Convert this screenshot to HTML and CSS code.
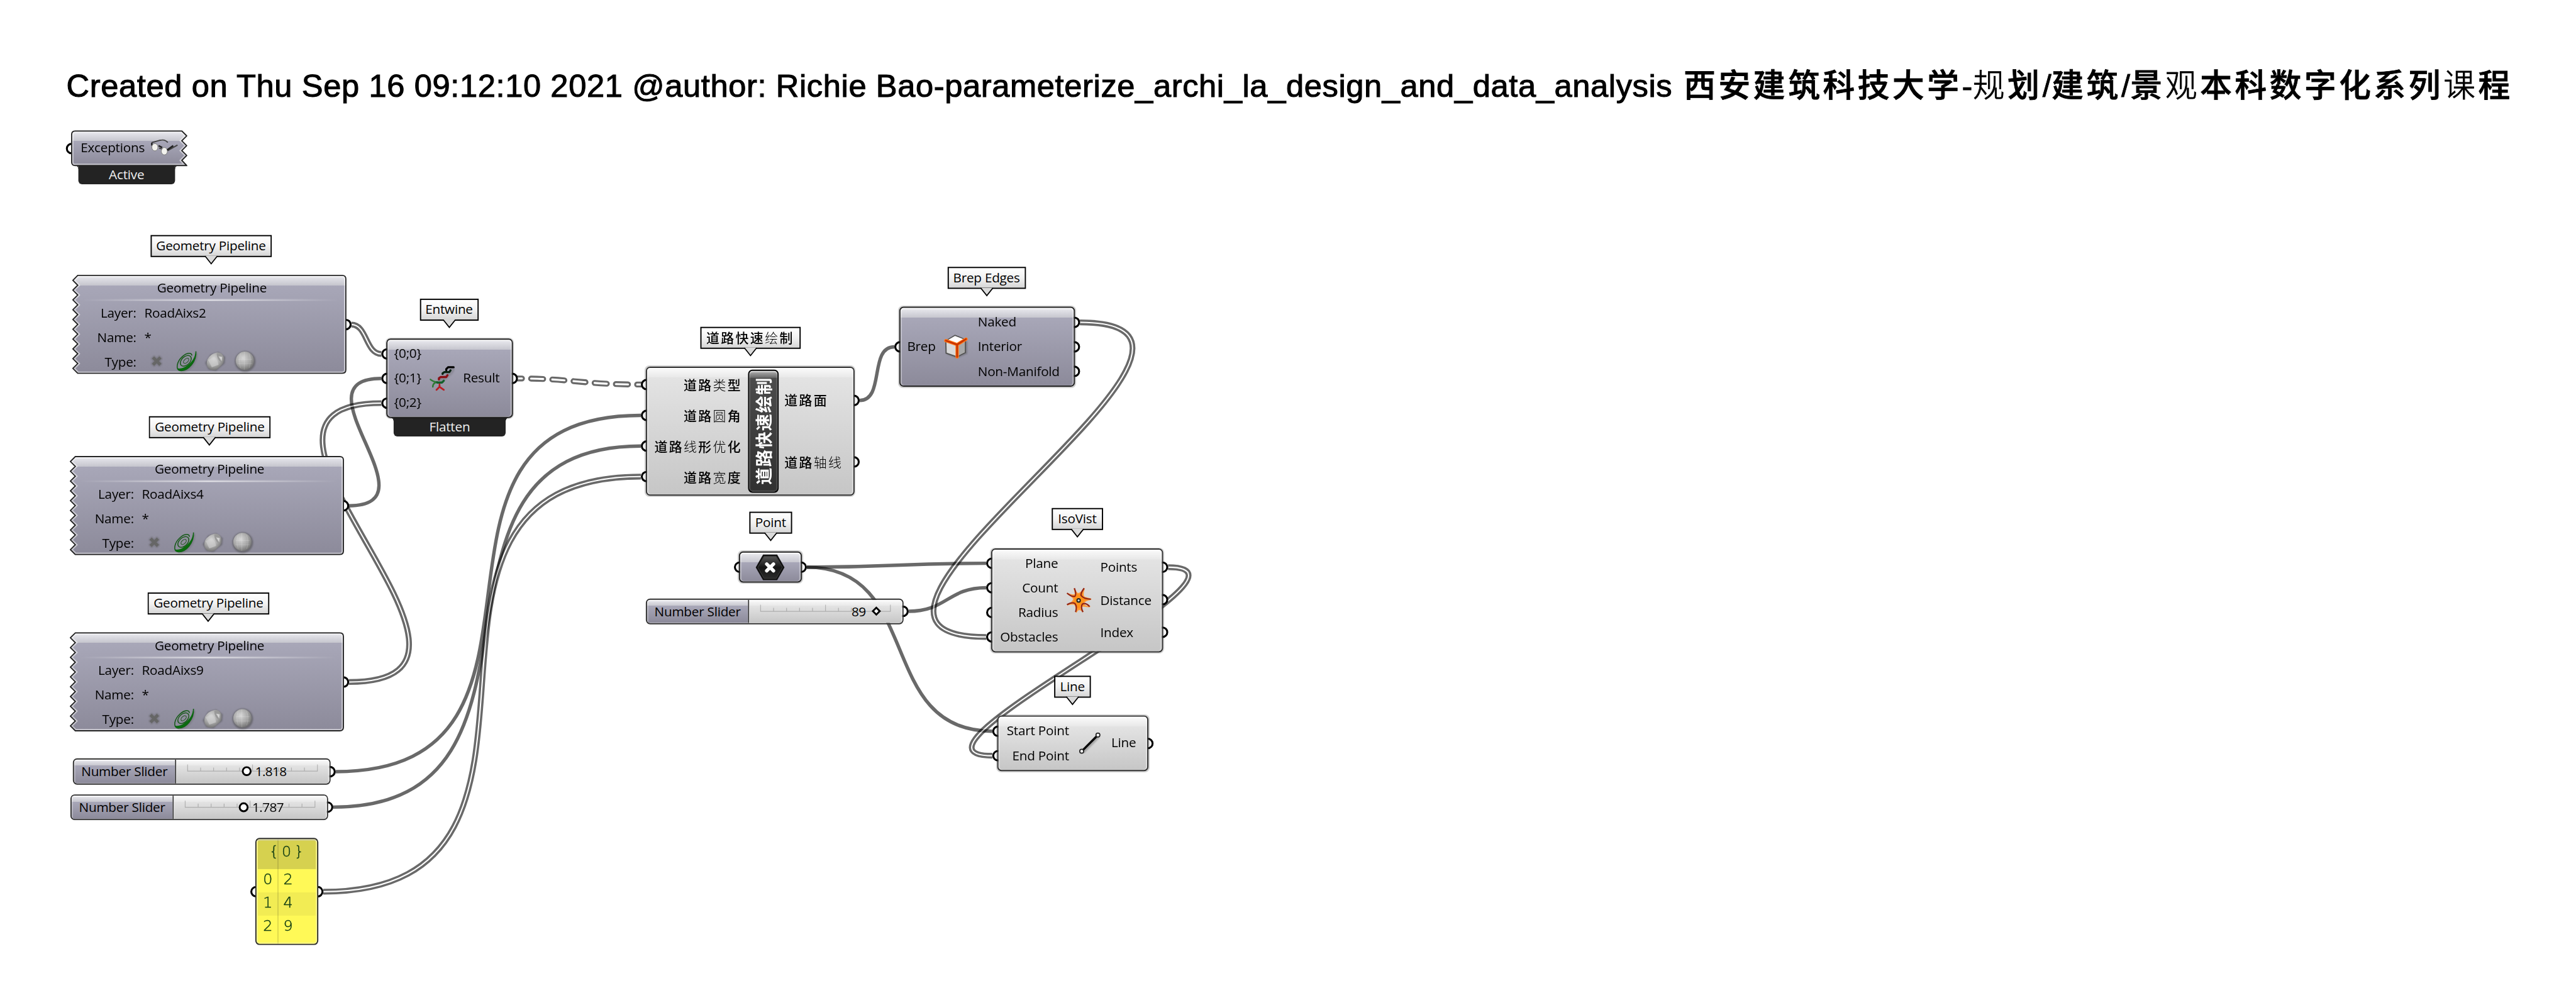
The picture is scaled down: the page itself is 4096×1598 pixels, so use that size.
FILE: index.html
```
<!DOCTYPE html>
<html lang="zh">
<head>
<meta charset="utf-8">
<title>Definition canvas</title>
<link rel="stylesheet" href="styles.css">
</head>
<body>
<svg class="defs" width="0" height="0" aria-hidden="true">
  <defs>
    <linearGradient id="violet" x1="0" y1="0" x2="0" y2="1">
      <stop offset="0" stop-color="#ebebf0"/><stop offset=".1" stop-color="#c6c6ce"/>
      <stop offset=".1" stop-color="#a8a7b8"/><stop offset="1" stop-color="#8c8a9a"/>
    </linearGradient>
    <linearGradient id="violet-short" x1="0" y1="0" x2="0" y2="1">
      <stop offset="0" stop-color="#ebebf0"/><stop offset=".29" stop-color="#c6c6ce"/>
      <stop offset=".29" stop-color="#a8a7b8"/><stop offset="1" stop-color="#8c8a9a"/>
    </linearGradient>
    <linearGradient id="rule" x1="0" x2="1" y1="0" y2="0">
      <stop offset="0" stop-color="#fff" stop-opacity="0"/><stop offset=".5" stop-color="#fff"/>
      <stop offset="1" stop-color="#fff" stop-opacity="0"/>
    </linearGradient>
    <radialGradient id="ball" cx=".4" cy=".35" r=".7">
      <stop offset="0" stop-color="#d6d6d6"/><stop offset=".55" stop-color="#a9a9a9"/><stop offset="1" stop-color="#6c6c6c"/>
    </radialGradient>
    <linearGradient id="hex" x1="0" y1="0" x2="0" y2="1">
      <stop offset="0" stop-color="#555"/><stop offset=".5" stop-color="#161616"/><stop offset="1" stop-color="#2a2a2a"/>
    </linearGradient>
    <radialGradient id="flare">
      <stop offset="0" stop-color="#ff9a1a"/><stop offset=".6" stop-color="#ff8c1a"/><stop offset="1" stop-color="#ffb36a"/>
    </radialGradient>
    <filter id="soft" x="-20%" y="-20%" width="140%" height="140%"><feGaussianBlur stdDeviation="1.1"/></filter>

    <path id="torn" d="M9 1L1 9L9 17L1 25L9 33L1 41L9 49L1 57L9 65L1 73L9 81L1 89L9 97L1 105L9 113L1 121L9 129L1 137L9 145L1 153L9 161H441Q447 161 447 155V7Q447 1 441 1Z"/>
    <clipPath id="torn-clip"><use href="#torn"/></clipPath>
    <path id="torn-right" d="M7 1H181L189 9L181 17L189 25L181 33L189 41L181 49L189 57.500H7Q1 57.500 1 51.500V7Q1 1 7 1Z"/>
    <clipPath id="torn-right-clip"><use href="#torn-right"/></clipPath>

    <symbol id="pipeline-body" viewBox="0 0 448 162">
      <use href="#torn" fill="url(#violet)"/>
      <use href="#torn" fill="none" stroke="#fff" stroke-opacity=".5" stroke-width="6" clip-path="url(#torn-clip)"/>
      <use href="#torn" fill="none" stroke="#242424" stroke-width="1.900"/>
      <rect x="16" y="39" width="420" height="1.200" fill="url(#rule)" opacity=".25"/>
      <rect x="16" y="40.500" width="420" height="2" fill="url(#rule)" opacity=".75"/>
    </symbol>
    <symbol id="ico-x" viewBox="0 0 40 40">
      <path d="M13 13L27 27M27 13L13 27" stroke="#555" stroke-width="8" opacity=".35" filter="url(#soft)"/>
      <path d="M14 14L26 26M26 14L14 26" stroke="#666" stroke-width="5"/>
    </symbol>
    <symbol id="ico-spiral" viewBox="0 0 40 40">
      <path d="M37 6C38 22 24 38 11 36.500" stroke="#555" stroke-width="4" opacity=".25" fill="none" filter="url(#soft)"/>
      <path d="M36 4C37.500 20 24 37 10 35.500C2.500 34 4.500 21 14 12.500C21 6 29 5.500 29.500 11" fill="none" stroke="#155a18" stroke-width="1.600"/>
      <path d="M36.500 4C37 20 24 37 10 36C7.500 35 6 33.500 6 31.500C14 34.500 32 24 35 8Z" fill="#0a6b0f"/>
      <ellipse cx="19.500" cy="19.500" rx="10.500" ry="6.800" transform="rotate(-43 19.500 19.500)" fill="none" stroke="#1c5a1c" stroke-width="1.500"/>
      <ellipse cx="20" cy="19.500" rx="5.200" ry="3" transform="rotate(-43 20 19.500)" fill="none" stroke="#2b5a2b" stroke-width="1.200"/>
    </symbol>
    <symbol id="ico-solid" viewBox="0 0 40 40">
      <path d="M12 9L25 5L36 13L35 24L26 31L21 36L9 34L3 23Z" fill="#4a4a4a" opacity=".45" filter="url(#soft)"/>
      <path d="M7 17Q12 8 22 6Q32 5 34 15Q35 24 27 29Q21 37 12 34Q3 29 7 17Z" fill="url(#ball)"/>
      <path d="M22 7Q30 6 33 13Q33 20 29 22Q22 17 22 7Z" fill="#999"/>
      <path d="M25 12L31 13L30 20Z" fill="#d2d2d2"/>
      <path d="M8 18L18 13Q24 17 25 26L14 30Z" fill="#d2d2d2" opacity=".6"/>
    </symbol>
    <symbol id="ico-ball" viewBox="0 0 40 40">
      <circle cx="20.500" cy="20.500" r="17" fill="#4a4a4a" opacity=".5" filter="url(#soft)"/>
      <circle cx="20" cy="19.500" r="15" fill="url(#ball)"/>
      <path d="M19 5V34M9 17H32M13 8Q9 19 13 31M27 8Q31 19 27 31M8 24H32" fill="none" stroke="#fff" stroke-width="1" opacity=".18"/>
    </symbol>
    <symbol id="scale" viewBox="0 0 216 14">
      <path d="M1.500 1V12H213.500V1M22.700 6V12M43.900 6V12M65.100 6V12M86.300 6V12M107.500 1V12M128.700 6V12M149.900 6V12M171.100 6V12M192.300 6V12" fill="none" stroke="#000" stroke-opacity=".2" stroke-width="1.300"/>
    </symbol>
  </defs>
</svg>

<main class="canvas">
  <h1 class="title"><span class="title-latin">Created on Thu Sep 16 09:12:10 2021 @author: Richie Bao-parameterize_archi_la_design_and_data_analysis</span><span class="title-cjk">西安建筑科技大学<b>-</b><span class="light">规</span>划<b>/</b>建筑<b>/</b>景<span class="light">观</span>本科数字化系列<span class="light">课</span>程</span></h1>

  <svg class="wires" viewBox="0 0 4208 1642">
    <g class="wire">
      <path d="M570 826.300C715 826.300 478 618.300 623 618.300"/>
      <path d="M548 1260.700C973 1260.700 622 678.700 1047 678.700"/>
      <path d="M544 1318.700C949 1318.700 642 728.700 1047 728.700"/>
      <path d="M1404 654.300C1446 654.300 1419 566.700 1461 566.700"/>
      <path d="M1318 926.700C1464 926.700 1465 920.300 1611 920.300"/>
      <path d="M1318 926.700C1510 926.700 1429 1194.700 1621 1194.700"/>
      <path d="M1484 998.700C1547 998.700 1548 960.300 1611 960.300"/>
    </g>
    <g class="cable"><path d="M574 530.300C600 530.300 597 578.300 623 578.300"/><path class="core" d="M574 530.300C600 530.300 597 578.300 623 578.300"/></g>
    <g class="cable"><path d="M570 1114.300C886 1114.300 311 658.700 623 658.700"/><path class="core" d="M570 1114.300C886 1114.300 311 658.700 623 658.700"/></g>
    <g class="cable"><path d="M528 1456.900C999 1456.900 576 778.700 1047 778.700"/><path class="core" d="M528 1456.900C999 1456.900 576 778.700 1047 778.700"/></g>
    <g class="cable"><path d="M1764 526.700C2114 526.700 1261 1040.700 1611 1040.700"/><path class="core" d="M1764 526.700C2114 526.700 1261 1040.700 1611 1040.700"/></g>
    <g class="cable"><path d="M1908 926.700C2095 926.700 1434 1234.700 1621 1234.700"/><path class="core" d="M1908 926.700C2095 926.700 1434 1234.700 1621 1234.700"/></g>
    <g class="cable dashed"><path d="M837 618.300C942 618.300 942 628.300 1056 628.300"/><path class="core" d="M837 618.300C942 618.300 942 628.300 1056 628.300"/></g>
    <g class="grips">
      <circle cx="117" cy="242.700" r="7.800"/>
      <circle cx="565" cy="530.300" r="7.800"/><circle cx="561" cy="826.300" r="7.800"/><circle cx="561" cy="1114.300" r="7.800"/>
      <circle cx="539" cy="1260.700" r="7.800"/><circle cx="535" cy="1318.700" r="7.800"/>
      <circle cx="418.300" cy="1456.900" r="7.800"/><circle cx="519" cy="1456.900" r="7.800"/>
      <circle cx="632.300" cy="578.300" r="7.800"/><circle cx="632.300" cy="618.300" r="7.800"/><circle cx="632.300" cy="658.700" r="7.800"/><circle cx="836.700" cy="618.300" r="7.800"/>
      <circle cx="1056.300" cy="628.300" r="7.800"/><circle cx="1056.300" cy="678.700" r="7.800"/><circle cx="1056.300" cy="728.700" r="7.800"/><circle cx="1056.300" cy="778.700" r="7.800"/>
      <circle cx="1395" cy="654.300" r="7.800"/><circle cx="1395" cy="754.700" r="7.800"/>
      <circle cx="1470.300" cy="566.700" r="7.800"/><circle cx="1755" cy="526.700" r="7.800"/><circle cx="1755" cy="566.700" r="7.800"/><circle cx="1755" cy="606.700" r="7.800"/>
      <circle cx="1208.300" cy="926.700" r="7.800"/><circle cx="1308.700" cy="926.700" r="7.800"/><circle cx="1475" cy="998.700" r="7.800"/>
      <circle cx="1620.300" cy="920.300" r="7.800"/><circle cx="1620.300" cy="960.300" r="7.800"/><circle cx="1620.300" cy="1000.700" r="7.800"/><circle cx="1620.300" cy="1040.700" r="7.800"/>
      <circle cx="1899" cy="926.700" r="7.800"/><circle cx="1899" cy="979.700" r="7.800"/><circle cx="1899" cy="1033" r="7.800"/>
      <circle cx="1630.300" cy="1194.700" r="7.800"/><circle cx="1630.300" cy="1234.700" r="7.800"/><circle cx="1875" cy="1214.700" r="7.800"/>
    </g>
  </svg>

  <section class="node exceptions">
    <svg class="body" viewBox="0 0 190 58.500">
      <use href="#torn-right" fill="url(#violet-short)"/>
      <use href="#torn-right" fill="none" stroke="#fff" stroke-opacity=".5" stroke-width="6" clip-path="url(#torn-right-clip)"/>
      <use href="#torn-right" fill="none" stroke="#242424" stroke-width="1.900"/>
    </svg>
    <div class="exceptions-row">
      <span>Exceptions</span>
      <svg class="glasses" viewBox="0 0 46 30">
        <path d="M2 7L14 3.500Q24 1 28 7M14 16L28 20L44 11" fill="none" stroke="#444" stroke-width="2"/>
        <path d="M2 7L2 12M13 12L19 15" stroke="#222" stroke-width="2.500"/>
        <ellipse cx="7" cy="14.500" rx="5" ry="6" fill="#f2f2ee" stroke="#777"/>
        <ellipse cx="22.500" cy="21" rx="5" ry="6" fill="#f2f2ee" stroke="#777"/>
        <path d="M27 19L37 12" stroke="#222" stroke-width="2.600"/>
      </svg>
    </div>
    <div class="message">Active</div>
  </section>

  <div class="tag tag-p1">Geometry Pipeline<svg viewBox="0 0 24 16"><path d="M1.700 0L12 13L22.300 0"/></svg></div>
  <section class="node pipeline p1">
    <svg class="body"><use href="#pipeline-body"/></svg>
    <h2>Geometry Pipeline</h2>
    <dl>
      <dt>Layer:</dt><dd>RoadAixs2</dd>
      <dt>Name:</dt><dd>*</dd>
      <dt>Type:</dt><dd class="types"><svg><use href="#ico-x"/></svg><svg><use href="#ico-spiral"/></svg><svg><use href="#ico-solid"/></svg><svg><use href="#ico-ball"/></svg></dd>
    </dl>
  </section>

  <div class="tag tag-p2">Geometry Pipeline<svg viewBox="0 0 24 16"><path d="M1.700 0L12 13L22.300 0"/></svg></div>
  <section class="node pipeline p2">
    <svg class="body"><use href="#pipeline-body"/></svg>
    <h2>Geometry Pipeline</h2>
    <dl>
      <dt>Layer:</dt><dd>RoadAixs4</dd>
      <dt>Name:</dt><dd>*</dd>
      <dt>Type:</dt><dd class="types"><svg><use href="#ico-x"/></svg><svg><use href="#ico-spiral"/></svg><svg><use href="#ico-solid"/></svg><svg><use href="#ico-ball"/></svg></dd>
    </dl>
  </section>

  <div class="tag tag-p3">Geometry Pipeline<svg viewBox="0 0 24 16"><path d="M1.700 0L12 13L22.300 0"/></svg></div>
  <section class="node pipeline p3">
    <svg class="body"><use href="#pipeline-body"/></svg>
    <h2>Geometry Pipeline</h2>
    <dl>
      <dt>Layer:</dt><dd>RoadAixs9</dd>
      <dt>Name:</dt><dd>*</dd>
      <dt>Type:</dt><dd class="types"><svg><use href="#ico-x"/></svg><svg><use href="#ico-spiral"/></svg><svg><use href="#ico-solid"/></svg><svg><use href="#ico-ball"/></svg></dd>
    </dl>
  </section>

  <section class="node slider s1">
    <div class="slider-name">Number Slider</div>
    <div class="slider-track">
      <svg class="scale"><use href="#scale"/></svg>
      <span class="knob"></span><span class="value">1.818</span>
    </div>
  </section>
  <section class="node slider s2">
    <div class="slider-name">Number Slider</div>
    <div class="slider-track">
      <svg class="scale"><use href="#scale"/></svg>
      <span class="knob"></span><span class="value">1.787</span>
    </div>
  </section>
  <section class="node slider s3">
    <div class="slider-name">Number Slider</div>
    <div class="slider-track">
      <svg class="scale"><use href="#scale"/></svg>
      <span class="value">89</span><span class="knob diamond"></span>
    </div>
  </section>

  <section class="node panel">
    <header>{0}</header>
    <div class="panel-row"><span>0</span><span>2</span></div>
    <div class="panel-row alt"><span>1</span><span>4</span></div>
    <div class="panel-row"><span>2</span><span>9</span></div>
  </section>

  <div class="tag tag-entwine">Entwine<svg viewBox="0 0 24 16"><path d="M1.700 0L12 13L22.300 0"/></svg></div>
  <section class="node component violet entwine">
    <div class="message">Flatten</div>
    <div class="port-col in"><span>{0;0}</span><span>{0;1}</span><span>{0;2}</span></div>
    <svg class="icon" viewBox="0 0 41 41">
      <path d="M14 22Q26 22 28 16Q36 12 39 3" stroke="#444" stroke-width="6" opacity=".2" fill="none" filter="url(#soft)"/>
      <g fill="none" stroke-width="3.400" stroke-linecap="round" stroke-linejoin="round">
        <path d="M1 22Q6 26 12 26Q5 28 5 34" stroke="#2f7a35" stroke-width="2.600"/>
        <path d="M12 27H20L23 24" stroke="#14602a"/>
        <path d="M15 22V20L18 18H27L29 15" stroke="#8a1016"/>
        <path d="M11 39L16 34L23 39M16 34V30" stroke="#b81c22" stroke-width="2.800"/>
        <path d="M21 13V12L24 10H32L34 7" stroke="#0b2413"/>
        <path d="M27 7V5L30 2H39" stroke="#000"/>
      </g>
    </svg>
    <div class="port-col"><span>Result</span></div>
  </section>

  <div class="tag cjk tag-road">道路快速<span class="light">绘</span>制<svg viewBox="0 0 24 16"><path d="M1.700 0L12 13L22.300 0"/></svg></div>
  <section class="node component road">
    <div class="port-col in cjk"><span>道路<i>类</i>型</span><span>道路<i>圆</i>角</span><span>道路<i>线</i>形<i>优</i>化</span><span>道路<i>宽</i>度</span></div>
    <div class="spine"><span>道路快速绘制</span></div>
    <div class="port-col cjk"><span>道路面</span><span>道路<i>轴线</i></span></div>
  </section>

  <div class="tag tag-brep">Brep Edges<svg viewBox="0 0 24 16"><path d="M1.700 0L12 13L22.300 0"/></svg></div>
  <section class="node component violet brep">
    <div class="port-col in"><span>Brep</span></div>
    <svg class="icon" viewBox="0 0 41 41">
      <path d="M4 12L20 3L38 12V32L22 39L5 33Z" fill="#444" opacity=".35" filter="url(#soft)"/>
      <path d="M3 11L18 2L35 9V30L21 37L3.500 31Z" fill="#d9d9d9" stroke="#555" stroke-width="2"/>
      <path d="M4 11L18 3L34 9L21 15Z" fill="#fff"/>
      <path d="M22 17L34 11V29L22 36Z" fill="#a8a8a8"/>
      <path d="M3 10.500L21.500 17L36 8M21.500 17V37" fill="none" stroke="#ff7a1a" stroke-width="5.400" stroke-linecap="round"/>
      <path d="M3 10.500L21.500 17L36 8M21.500 17V37" fill="none" stroke="#c83200" stroke-width="2.800" stroke-linecap="round"/>
    </svg>
    <div class="port-col"><span>Naked</span><span>Interior</span><span>Non-Manifold</span></div>
  </section>

  <div class="tag tag-point">Point<svg viewBox="0 0 24 16"><path d="M1.700 0L12 13L22.300 0"/></svg></div>
  <section class="node component violet point">
    <svg class="hexagon" viewBox="0 0 48 44">
      <path d="M12.500 1H35.500L47.500 22L35.500 43H12.500L.5 22Z" fill="#111"/>
      <path d="M14 4H34L44 22L34 40H14L4 22Z" fill="url(#hex)" stroke="#3c3c3c" stroke-width="1"/>
      <path d="M18.500 16.500L29.500 27.500M29.500 16.500L18.500 27.500" stroke="#fff" stroke-width="5.600" stroke-linecap="round"/>
    </svg>
  </section>

  <div class="tag tag-iso">IsoVist<svg viewBox="0 0 24 16"><path d="M1.700 0L12 13L22.300 0"/></svg></div>
  <section class="node component iso">
    <div class="port-col in"><span>Plane</span><span>Count</span><span>Radius</span><span>Obstacles</span></div>
    <svg class="icon" viewBox="0 0 41 41">
      <path d="M13 2Q16 10 20 10Q25 8 29 2Q25 14 30 16L40 19Q30 21 28 25Q29 32 38 31Q26 30 23 30Q23 34 27 39Q20 32 16 40Q17 30 13 27Q8 26 2 28Q12 24 12 18Q8 13 2 10Q12 14 15 11Z" fill="url(#flare)" stroke="#ff9a3a" stroke-width="2" stroke-linejoin="round"/>
      <g fill="none" stroke="#8e2318" stroke-width="2.200">
        <path d="M13 1Q17 11 14 14Q9 16 1 9"/><path d="M29 1Q23 9 24 13Q29 19 40 19"/>
        <path d="M1 28Q9 23 14 26Q18 31 15 40"/><path d="M27 40Q23 32 26 27Q31 24 38 31"/>
      </g>
      <circle cx="20" cy="21" r="2.700" fill="#ccc" stroke="#222" stroke-width="2"/>
    </svg>
    <div class="port-col"><span>Points</span><span>Distance</span><span>Index</span></div>
  </section>

  <div class="tag tag-line">Line<svg viewBox="0 0 24 16"><path d="M1.700 0L12 13L22.300 0"/></svg></div>
  <section class="node component line">
    <div class="port-col in"><span>Start Point</span><span>End Point</span></div>
    <svg class="icon" viewBox="0 0 41 41">
      <path d="M9 35L35 9" stroke="#333" stroke-width="5" opacity=".3" filter="url(#soft)"/>
      <path d="M7.500 33L33.500 7" stroke="#000" stroke-width="3.600"/>
      <circle cx="7" cy="33.500" r="3.200" fill="#fff" stroke="#222" stroke-width="1.800"/>
      <circle cx="33.500" cy="7" r="3.200" fill="#fff" stroke="#222" stroke-width="1.800"/>
    </svg>
    <div class="port-col"><span>Line</span></div>
  </section>
</main>
</body>
</html>
```
FILE: styles.css
```
* { box-sizing: border-box; }

html, body {
  margin: 0;
  width: 4096px;
  height: 1598px;
  overflow: hidden;
  background: #fff;
}

.defs { position: absolute; }

.canvas {
  position: relative;
  width: 4208px;
  height: 1642px;
  transform: scale(.97338, .9732);
  transform-origin: 0 0;
  font-family: "Open Sans", "Noto Sans", "Noto Sans CJK SC", sans-serif;
  font-size: 21.3px;
  line-height: 30px;
  letter-spacing: -.25px;
  color: #000;
}

.title {
  display: flex;
  align-items: baseline;
  margin: 0;
  padding: 103.5px 0 0 108.5px;
  font: 400 52px/64px "Liberation Sans", "Noto Sans CJK SC", sans-serif;
  white-space: nowrap;
}
.title-latin { width: 2642px; letter-spacing: .64px; -webkit-text-stroke: 1.1px #000; }
.title-cjk { font-family: "Noto Sans CJK SC", sans-serif; font-weight: 500; letter-spacing: 4.8px; -webkit-text-stroke: .9px #000; }
.title-cjk .light { font-weight: 300; }
.title-cjk b { font-family: "Liberation Sans", sans-serif; font-weight: 400; letter-spacing: .6px; }

.wires { position: absolute; left: 0; top: 0; width: 4208px; height: 1642px; }
.wire path { fill: none; stroke: #000; stroke-opacity: .59; stroke-width: 5.6; }
.cable { opacity: .59; }
.cable path { fill: none; stroke: #000; stroke-width: 9.4; }
.cable .core { stroke: #fff; stroke-width: 2.1; }
.dashed path { stroke-dasharray: 20 14.8; stroke-dashoffset: 4.5; stroke-linecap: round; stroke-width: 9.6; }
.dashed .core { stroke-width: 3.2; }
.grips circle { fill: #fff; stroke: #000; stroke-width: 3.2; }

/* Balloon captions above the components */
.tag {
  position: absolute;
  display: flex;
  align-items: center;
  justify-content: center;
  height: 36px;
  padding-bottom: 2px;
  border: 2px solid #000;
  background: linear-gradient(#fff, #f2f2f2 50%, #d6d6d6);
  white-space: nowrap;
}
.tag svg { position: absolute; top: 32px; left: 50%; width: 24px; height: 16px; margin-left: -12px; fill: #dadada; stroke: #000; stroke-width: 1.8; }
.tag-p1 { left: 245.5px; top: 383.5px; width: 198.4px; }
.tag-p2 { left: 243.3px; top: 679.5px; width: 198.4px; }
.tag-p3 { left: 241.3px; top: 967.5px; width: 198.4px; }
.tag-entwine { left: 685.5px; top: 487.8px; width: 96px; }
.tag-road { left: 1143.5px; top: 533.5px; width: 164px; }
.tag-brep { left: 1547.5px; top: 435.5px; width: 128px; }
.tag-point { left: 1223.8px; top: 835.5px; width: 70px; }
.tag-iso { left: 1717.8px; top: 829.5px; width: 84px; }
.tag-line { left: 1721.8px; top: 1103.5px; width: 60px; }

.cjk { font-family: "Noto Sans CJK SC", sans-serif; font-weight: 500; font-size: 21.5px; letter-spacing: 2.4px; }
.cjk i, .cjk .light { font-style: normal; font-weight: 300; }

.node { position: absolute; white-space: nowrap; }
.body { position: absolute; left: 0; top: 0; width: 100%; height: 100%; }

.component {
  display: grid;
  gap: 0 14px;
  padding: 3px 0;
  border: 2px solid #303030;
  border-radius: 7px;
  background: linear-gradient(#fbfbfb, #e8e8e8 16px, #e3e3e3 16px, #c6c6c6);
  box-shadow: inset 0 2px 1px rgba(255, 255, 255, .8), inset 2px 0 1px rgba(255, 255, 255, .4), inset -2px 0 1px rgba(255, 255, 255, .4), 0 0 1px 1px rgba(0, 0, 0, .2);
}
.violet { background: linear-gradient(#ebebf0, #c6c6ce 16px, #a8a7b8 16px, #8c8a9a); border-color: #242424; }
.port-col { display: flex; flex-direction: column; }
.port-col span { flex: 1; display: flex; align-items: center; padding-bottom: 2px; }
.port-col.in span { justify-content: flex-end; }
.icon { width: 41px; height: 41px; align-self: center; }

/* Dark message strip hanging under a component */
.message {
  position: absolute;
  left: 10px;
  right: 10px;
  top: 100%;
  z-index: -1;
  height: 31px;
  border-radius: 0 0 6px 6px;
  background: #232323;
  color: #f0f0f0;
  text-align: center;
  line-height: 29px;
}
.message::before, .message::after {
  content: "";
  position: absolute;
  top: 0;
  width: 6px;
  height: 6px;
}
.message::before { right: 100%; background: radial-gradient(circle at 0 100%, transparent 5.5px, #232323 6px); }
.message::after { left: 100%; background: radial-gradient(circle at 100% 100%, transparent 5.5px, #232323 6px); }

.entwine { left: 631.3px; top: 553.3px; width: 206.4px; height: 130px; grid-template-columns: 55px 41px 1fr; column-gap: 13.5px; }
.road { left: 1055.3px; top: 599.3px; width: 340.7px; height: 210.4px; grid-template-columns: 155px 50px 1fr; column-gap: 9.5px; }
.brep { left: 1469.3px; top: 501.3px; width: 286.7px; height: 130.4px; grid-template-columns: 57px 41px 1fr; }
.iso { left: 1619.3px; top: 895.7px; width: 280.7px; height: 170.3px; grid-template-columns: 107px 41px 1fr; }
.line { left: 1629.3px; top: 1169.3px; width: 246.7px; height: 90.4px; grid-template-columns: 115px 41px 1fr; }
.point { left: 1207.3px; top: 901.3px; width: 102.4px; height: 50.7px; padding: 0; place-items: center; }
.hexagon { width: 48px; height: 44px; }
.entwine .message { top: 127px; }

.spine {
  display: flex;
  align-items: center;
  justify-content: center;
  align-self: stretch;
  margin: -.5px 0;
  border: 2px solid #000;
  border-radius: 7px;
  background: linear-gradient(#b4b4b4, #6a6a6a 11px, #4c4c4c 11px, #303030);
  box-shadow: inset 0 2px 1px rgba(255, 255, 255, .5), inset 0 0 2px 1px rgba(255, 255, 255, .25);
}
.spine span { transform: rotate(-90deg); color: #fff; font: 700 28px/40px "Noto Sans CJK SC", sans-serif; letter-spacing: 1.3px; }

.exceptions { left: 115.7px; top: 213.3px; width: 190px; height: 58.500px; }
.exceptions-row { position: relative; display: flex; align-items: center; gap: 10px; height: 56px; padding-left: 16px; }
.glasses { width: 46px; height: 30px; }
.exceptions .message { left: 12px; right: auto; width: 158px; top: 57px; }

.pipeline { width: 448px; height: 162px; padding-top: 1px; }
.p1 { left: 117.7px; top: 449.3px; }
.p2 { left: 113.7px; top: 745.3px; }
.p3 { left: 113.7px; top: 1033.3px; }
.pipeline h2 { position: relative; margin: 0; padding-left: 9px; font: inherit; line-height: 40px; text-align: center; }
.pipeline dl { position: relative; display: grid; grid-template-columns: 105px 1fr; grid-auto-rows: 40px; column-gap: 13px; margin: 0; line-height: 41px; }
.pipeline dt { text-align: right; }
.pipeline dd { margin: 0; }
.pipeline .types { display: flex; gap: 8px; }
.types svg { width: 40px; height: 40px; }

.slider {
  display: flex;
  width: 421px;
  height: 42.500px;
  border: 2px solid #303030;
  border-radius: 7px;
  overflow: hidden;
}
.s1 { left: 118.8px; top: 1239.3px; }
.s2 { left: 115px; top: 1297.500px; }
.s3 { left: 1055px; top: 977.5px; }
.slider-name {
  width: 167px;
  border-right: 2px solid #303030;
  padding-left: 12px;
  line-height: 38px;
  background: linear-gradient(#ebebf0, #c6c6ce 10px, #a8a7b8 10px, #8c8a9a);
  box-shadow: inset 0 2px 1px rgba(255, 255, 255, .7), inset 2px 0 1px rgba(255, 255, 255, .3);
}
.slider-track {
  position: relative;
  flex: 1;
  background: linear-gradient(#fbfbfb, #e8e8e8 10px, #e3e3e3 10px, #c6c6c6);
  box-shadow: inset 0 2px 1px rgba(255, 255, 255, .8), inset -2px 0 1px rgba(255, 255, 255, .4);
}
.scale { position: absolute; left: 17px; top: 7px; width: 216px; height: 14px; }
.knob { position: absolute; top: 11px; width: 16px; height: 16px; border: 3.6px solid #000; border-radius: 50%; background: #fff; }
.value { position: absolute; line-height: 38px; letter-spacing: -.6px; }
.s1 .knob { left: 107px; }
.s1 .value { left: 129px; }
.s2 .knob { left: 105.500px; }
.s2 .value { left: 128px; }
.s3 .value { left: 167px; }
.knob.diamond { left: 202px; top: 13.500px; width: 11px; height: 11px; border-width: 3px; border-radius: 0; transform: rotate(45deg); }

.panel {
  left: 417.3px;
  top: 1369.2px;
  width: 102.7px;
  height: 174.700px;
  padding-bottom: 10px;
  border: 2px solid #303030;
  border-radius: 7px;
  overflow: hidden;
  color: #143f14;
  font: 200 24.500px/33px "DejaVu Sans", sans-serif;
  -webkit-text-stroke: .5px #143f14;
  background: linear-gradient(90deg, transparent 34.500px, rgba(0, 0, 0, .12) 34.500px, rgba(0, 0, 0, .12) 36px, transparent 36px) #fff957;
  box-shadow: inset 0 2px 1px rgba(255, 255, 255, .5), inset 0 0 1px 2px rgba(255, 255, 255, .35);
}
.panel header { height: 49px; padding: 2px 0 0 4px; margin: 0 1.5px; text-align: center; letter-spacing: 5px; background: rgba(0, 0, 40, .16); line-height: 38px; }
.panel-row { display: grid; grid-template-columns: 33px 1fr; margin: 0 1.5px; height: 38px; padding-left: 9px; letter-spacing: 0; }
.panel-row.alt { background: rgba(0, 0, 40, .05); }
```
